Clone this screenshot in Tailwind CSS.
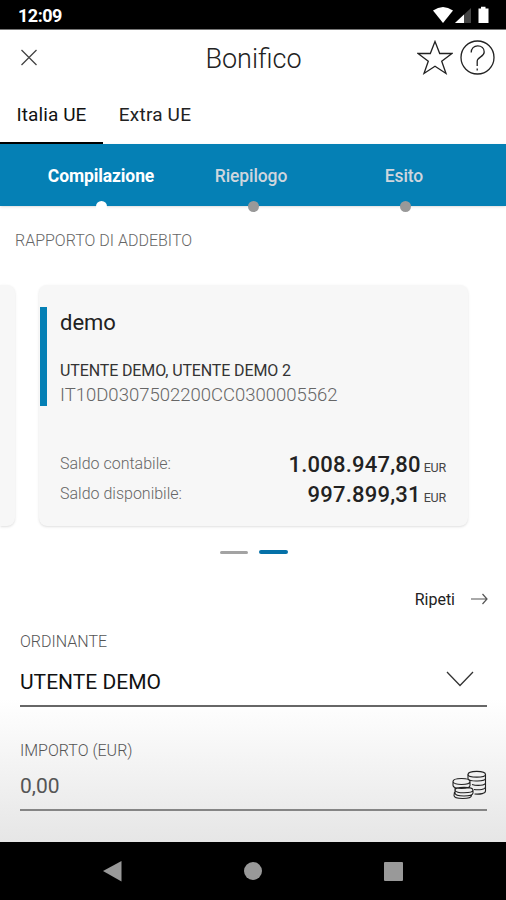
<!DOCTYPE html>
<html lang="it">

<head>
  <meta charset="UTF-8" />
  <meta name="viewport" content="width=device-width, initial-scale=1.0" />
  <title>Bonifico</title>
  <script src="https://cdn.jsdelivr.net/npm/@tailwindcss/browser@4"></script>
</head>

<body class="bg-white font-[Roboto,sans-serif] text-[#222]">
  <div class="w-[506px] h-[900px] flex flex-col overflow-hidden whitespace-nowrap">

    <!-- Status bar -->
    <div class="h-[30px] shrink-0 bg-black border-b border-[#777] flex items-center justify-between pl-[18px] pr-4">
      <span class="text-white text-[18px] font-bold leading-none tracking-[-0.5px] pt-[3px]">12:09</span>
      <svg class="w-[58px] h-[18px] mt-[1px]" viewBox="0 0 58 18">
        <path d="M1 4.500Q11 -2.500 21 4.500L11 17Z" fill="#fff" />
        <path d="M39 2v15H23z" fill="#444" />
        <path d="M32 8.500V17H23z" fill="#fff" />
        <path d="M46.500 2.500h2.500V.8h4.500v1.700h3V17h-10z" fill="#fff" />
      </svg>
    </div>

    <!-- Header -->
    <header class="h-[57px] shrink-0 flex items-center justify-between pl-5 pr-[11px]">
      <svg class="w-[70px] h-[18px] -mt-[1px]" viewBox="0 0 70 18" fill="none" stroke="#444" stroke-width="1.300">
        <path d="M1.500 1l15 15M16.500 1l-15 15" />
      </svg>
      <h1 class="text-[27px] font-light leading-none pt-[2px]">Bonifico</h1>
      <div class="flex items-center gap-[7px] -mt-[2px]">
        <svg class="w-9 h-9" viewBox="0 0 36 36" fill="none" stroke="#222" stroke-width="1.300">
          <path d="M18 1.500l4.700 12H35l-10.300 7.800 4.300 12.200-11-7.300-11 7.300 4.300-12.200L1 13.500h12.300z" />
        </svg>
        <svg class="w-[35px] h-[35px]" viewBox="0 0 35 35" fill="none" stroke="#222" stroke-width="1.300">
          <circle cx="17.500" cy="17.500" r="16.500" />
          <path d="M11.200 12.500c0-4 2.800-6.700 6.500-6.700s6.500 2.500 6.500 6.200c0 5.200-7 4.500-7 9.500V26M17.200 28.500v2" />
        </svg>
      </div>
    </header>

    <!-- Tabs -->
    <nav class="h-[57px] shrink-0 flex text-[19px] leading-none">
      <div class="w-[103px] border-b-2 border-black flex items-center justify-center pb-px text-[#111] tracking-[0.1px]">Italia UE</div>
      <div class="w-[104px] flex items-center justify-center pb-[3px] tracking-[0.2px]">Extra UE</div>
    </nav>

    <!-- Stepper -->
    <div class="h-[62px] shrink-0 bg-[#0580b5] shadow-sm grid grid-cols-[152px_152px_152px] pl-[25px] text-[17.500px] font-medium text-[#cfd6de] text-center tracking-[-0.1px]">
      <div class="relative pt-[19px]">
        <span class="font-bold text-white">Compilazione</span>
        <i class="absolute left-[71px] -bottom-[6px] size-[11px] rounded-full bg-white"></i>
      </div>
      <div class="relative pt-[19px] pr-1">
        <span>Riepilogo</span>
        <i class="absolute left-[71px] -bottom-[6px] size-[11px] rounded-full bg-[#999]"></i>
      </div>
      <div class="relative pt-[19px] pr-[2px]">
        <span>Esito</span>
        <i class="absolute left-[71px] -bottom-[6px] size-[11px] rounded-full bg-[#999]"></i>
      </div>
    </div>

    <!-- Debit account -->
    <h2 class="h-[79px] shrink-0 pl-[15px] pt-[27px] text-[16px] leading-4 font-light text-[#666]">RAPPORTO DI ADDEBITO</h2>
    <div class="h-[241px] shrink-0 flex gap-6">
      <div class="w-[15px] rounded-r-lg bg-[#f7f7f7] shadow-sm"></div>
      <div class="w-[429px] rounded-lg bg-[#f7f7f7] shadow-sm flex pt-[22px]">
        <div class="w-[7px] h-[99px] mr-[13px] ml-px bg-[#0580b5]"></div>
        <div class="w-[386px] flex flex-col">
          <div class="text-[22px] leading-8">demo</div>
          <div class="mt-5 text-[16px] leading-6 tracking-[-0.120px] text-[#333]">UTENTE DEMO, UTENTE DEMO 2</div>
          <div class="text-[18.500px] leading-6 font-light text-[#666]">IT10D0307502200CC0300005562</div>
          <div class="mt-[42px] h-[30px] flex justify-between items-center">
            <span class="text-[16px] font-light text-[#666]">Saldo contabile:</span>
            <span class="text-[22px] font-medium tracking-[0.2px]">1.008.947,80<span class="ml-[3px] text-[12.500px] font-normal tracking-[-0.2px] text-[#444]">EUR</span></span>
          </div>
          <div class="h-[30px] flex justify-between items-center">
            <span class="text-[16px] font-light text-[#666]">Saldo disponibile:</span>
            <span class="text-[22px] font-medium tracking-[0.2px]">997.899,31<span class="ml-[3px] text-[12.500px] font-normal tracking-[-0.2px] text-[#444]">EUR</span></span>
          </div>
        </div>
      </div>
    </div>

    <!-- Carousel position -->
    <div class="h-[50px] shrink-0 flex items-center gap-[11px] pl-[220px] pt-[2px]">
      <div class="w-7 h-[3px] rounded-sm bg-[#a3a3a3]"></div>
      <div class="w-[29px] h-1 rounded-sm bg-[#0571a8]"></div>
    </div>

    <!-- Repeat -->
    <div class="h-[46px] shrink-0 flex items-center justify-end gap-4 pr-[18px]">
      <span class="text-[16px] pt-[2px]">Ripeti</span>
      <svg class="w-[17px] h-3" viewBox="0 0 17 12" fill="none" stroke="#555" stroke-width="1.200">
        <path d="M0 6h16M11.500 1L16 6l-4.500 5" />
      </svg>
    </div>

    <!-- Form -->
    <main class="h-[220px] shrink-0 px-5 pr-[19px] bg-linear-to-b from-white from-35% to-[#e6e6e6]">
      <div class="h-[85px] border-b-2 border-[#666]">
        <div class="pt-[8px] text-[16px] leading-6 font-light text-[#555]">ORDINANTE</div>
        <div class="mt-[12px] flex items-center justify-between text-[21px] leading-8 text-[#111] pr-[13px]">
          <span>UTENTE DEMO</span>
          <svg class="w-7 h-4 mb-[6px]" viewBox="0 0 28 16" fill="none" stroke="#333" stroke-width="1.300">
            <path d="M1 1l13 13.500L27 1" />
          </svg>
        </div>
      </div>
      <div class="h-[104px] border-b-2 border-[#858585]">
        <div class="pt-[32px] text-[16px] leading-6 font-light text-[#555]">IMPORTO (EUR)</div>
        <div class="mt-[7px] flex items-center justify-between text-[21px] leading-8 text-[#555]">
          <span>0,00</span>
          <svg class="w-9 h-[30px] mb-[2px]" viewBox="0 0 36 30" fill="none" stroke="#222" stroke-width="1.100">
            <!-- back pile -->
            <path d="M17 9V4.500C17 .3 34.500.3 34.500 4.500V21c0 2.500-5 3.500-11 3" />
            <path d="M17 4.500c0 3.500 17.500 3.500 17.500 0M17 9c2 3 17.500 2.500 17.500-.5M21 14.500c5 1.500 13.500 1 13.500-1.500M23 19.500c5 .8 11.500 0 11.500-2.500" />
            <!-- front pile -->
            <path d="M2 11.500c0-4 17-4 17 0s-17 4-17 0v4c0 4 17 4 17 0v-4M2 15.500l2 2.500M4 20c0-3.500 18-3.500 18 0s-18 4-18 0v3c0 4 18 4 18 0v-3M4 18v2M3.500 22L3 25.500c0 4 17.500 4 17.500 0v-1" />
          </svg>
        </div>
      </div>
    </main>

    <!-- Android navigation -->
    <div class="h-[58px] shrink-0 bg-black flex items-center justify-between pl-[103px] pr-[103px]">
      <svg class="w-[19px] h-[21px]" viewBox="0 0 19 21" fill="#999"><path d="M18.500 0v20.500L0 10z" /></svg>
      <div class="size-[18px] rounded-full bg-[#999]"></div>
      <div class="size-[19px] rounded-[1px] bg-[#999]"></div>
    </div>
  </div>
</body>

</html>
